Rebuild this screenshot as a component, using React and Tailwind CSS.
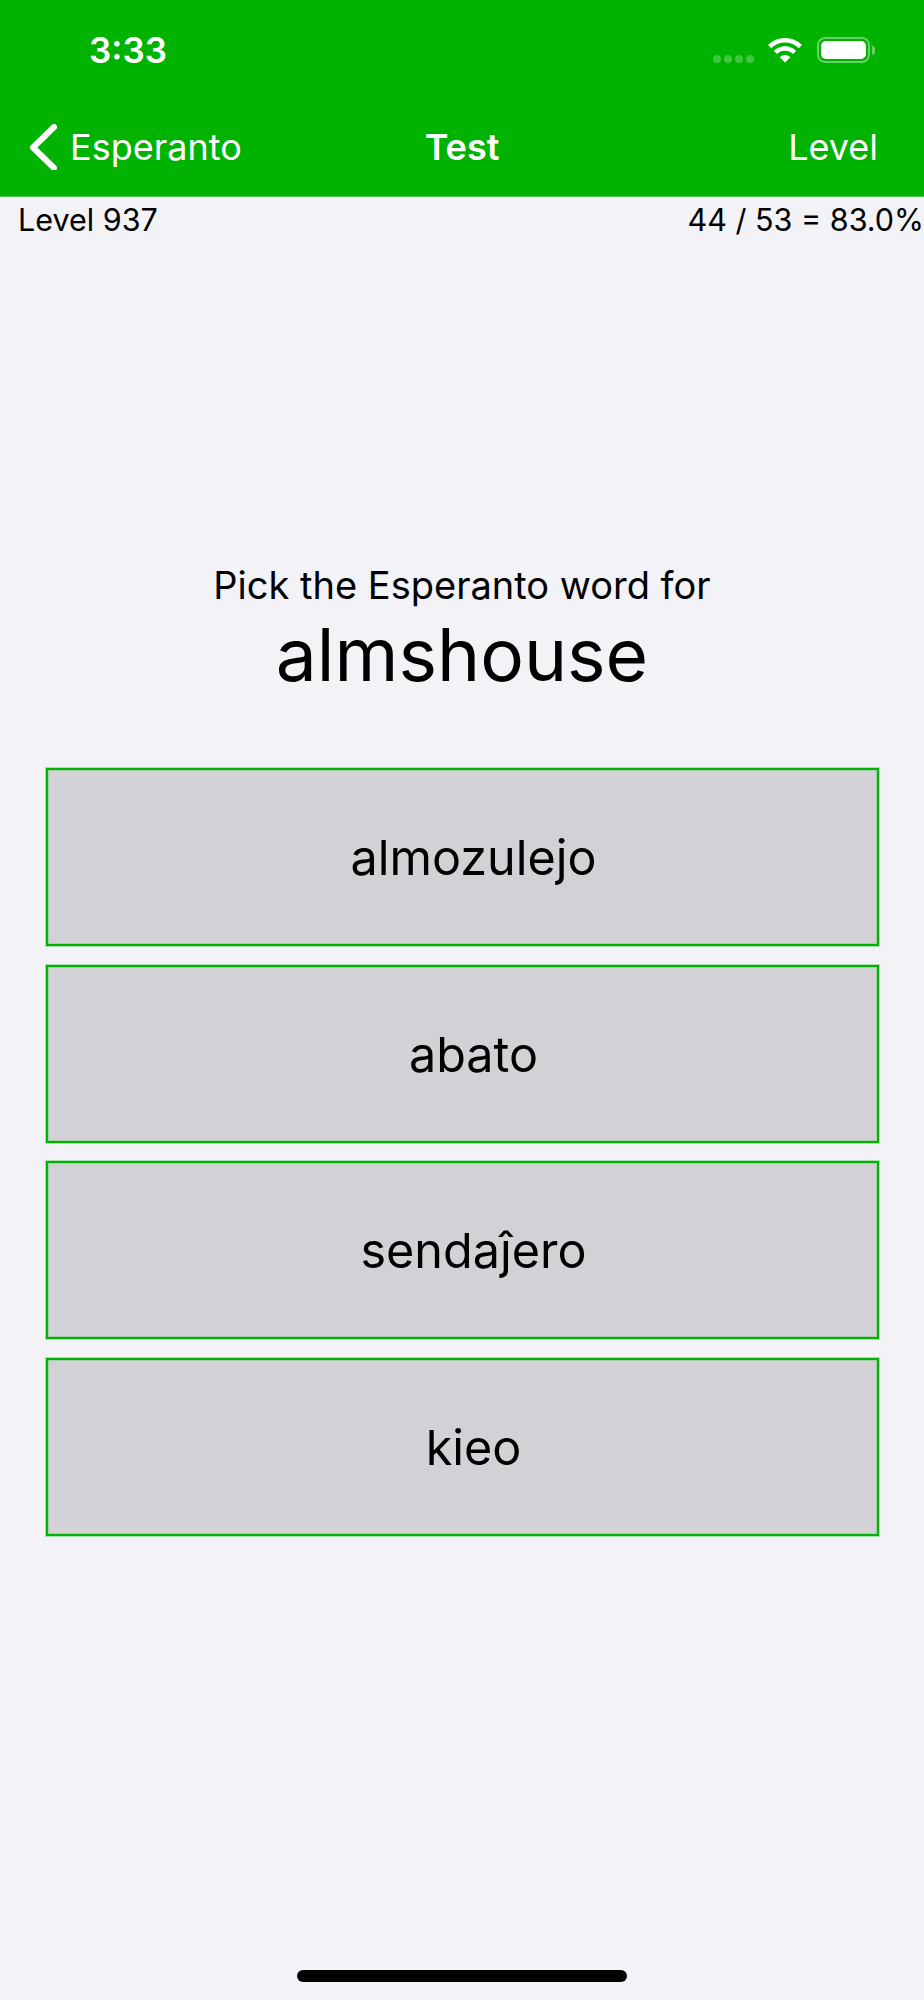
import React from "react";

const font = { fontFamily: "Inter, sans-serif" };

const answers = ["almozulejo", "abato", "sendaĵero", "kieo"];

function Wifi() {
  return (
    <svg width="36" height="26" viewBox="0 0 36 26" fill="none" className="block">
      <path d="M18 25.5L12.7 20.2A7.5 7.5 0 0 1 23.3 20.2Z" fill="#fff" />
      <path d="M8.45 15.45A13.5 13.5 0 0 1 27.55 15.45" stroke="#fff" strokeWidth="4.4" />
      <path d="M2.6 9.6A21.8 21.8 0 0 1 33.4 9.6" stroke="#fff" strokeWidth="4.6" />
    </svg>
  );
}

function Battery() {
  return (
    <div className="flex items-center">
      <div className="w-[53px] h-[26px] rounded-[8px] border-2 border-white/40 p-[2px]">
        <div className="w-full h-full bg-white rounded-[5px]" />
      </div>
      <div className="w-[3px] h-[9px] bg-white/40 rounded-r-full ml-[2px]" />
    </div>
  );
}

export default function App() {
  return (
    <div style={font} className="relative w-[924px] h-[2000px] overflow-hidden bg-[#f2f2f7] text-black flex flex-col">
      {/* status bar + nav */}
      <div className="h-[197px] bg-[#00b300] border-b border-[#4dca4d] text-white shrink-0">
        <div className="h-[124px] flex items-start justify-between pl-[89px] pr-[49px]">
          <div className="text-[35px] leading-[42px] font-semibold mt-[29px]">3:33</div>
          <div className="flex items-center mt-[37px]">
            <div className="flex gap-[3px] mt-[18px] mr-[13px]">
              <div className="w-[8px] h-[8px] rounded-full bg-white/25" />
              <div className="w-[8px] h-[8px] rounded-full bg-white/25" />
              <div className="w-[8px] h-[8px] rounded-full bg-white/25" />
              <div className="w-[8px] h-[8px] rounded-full bg-white/25" />
            </div>
            <Wifi />
            <div className="ml-[14px]">
              <Battery />
            </div>
          </div>
        </div>
        <div className="flex items-center justify-between pl-[29px] pr-[46px] h-[46px]">
          <div className="flex items-center gap-[13px] flex-1 min-w-0 whitespace-nowrap">
            <svg width="28" height="46" viewBox="0 0 28 46" fill="none" className="shrink-0">
              <path d="M25 3L4 23.5L25 44" stroke="#fff" strokeWidth="6" strokeLinecap="round" strokeLinejoin="round" />
            </svg>
            <span className="text-[36px] leading-[46px]">Esperanto</span>
          </div>
          <div className="ml-[17px] text-[36px] leading-[46px] font-semibold">Test</div>
          <div className="flex-1 min-w-0 text-right text-[36px] leading-[46px]">Level</div>
        </div>
      </div>

      {/* score row */}
      <div className="flex justify-between pl-[18px] text-[30.5px] leading-[46px] whitespace-nowrap">
        <span>Level 937</span>
        <span>44 / 53 = 83.0%</span>
      </div>

      {/* question */}
      <div className="mt-[317px] text-center">
        <div className="text-[38px] leading-[50px]">Pick the Esperanto word for</div>
        <div className="text-[73px] leading-[90px]">almshouse</div>
      </div>

      {/* answers */}
      <div className="mt-[68px] ml-[46px] mr-[45px] flex flex-col gap-[18.5px]">
        {answers.map((a) => (
          <button
            key={a}
            className="h-[178px] border-2 border-[#00b300] bg-[#d1d1d6] shadow-[0_0_0_1px_rgba(0,179,0,0.3),inset_0_0_0_1px_rgba(0,179,0,0.2)] text-[48.5px] pl-[22px] pt-[3px] flex items-center justify-center"
          >
            {a}
          </button>
        ))}
      </div>

      {/* home indicator */}
      <div className="absolute bottom-[18px] left-[297px] w-[330px] h-[12px] rounded-full bg-black" />
    </div>
  );
}
